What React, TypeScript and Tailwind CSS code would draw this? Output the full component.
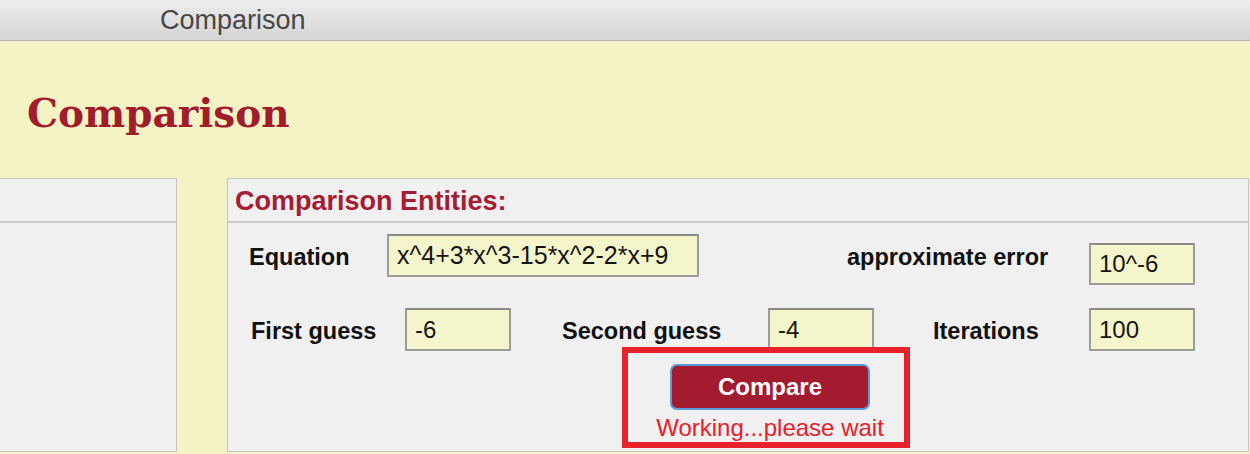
import React from "react";

const sans = { fontFamily: '"Liberation Sans", Arial, sans-serif' };

function Box({ value, w, h = 43, className = "" }: { value: string; w: string; h?: number; className?: string }) {
  return (
    <div
      className={`${w} ${className} flex items-center border-2 border-[#9c9c98] border-t-[#8a8a86] bg-[#f5f5cb] pl-[8px] text-[24px] leading-none text-[#141414]`}
      style={{ height: h }}
    >
      {value}
    </div>
  );
}

export default function App() {
  return (
    <div className="w-[1250px] h-[454px] overflow-hidden bg-[#f3f3c6]" style={sans}>
      {/* Title bar */}
      <div className="h-[41px] border-b border-[#b4b4b4] bg-gradient-to-b from-[#ededed] to-[#d4d4d4]">
        <div className="pl-[160px] text-[27px] leading-[40px] text-[#474747]">Comparison</div>
      </div>

      {/* Heading */}
      <div className="h-[137px] pl-[27px] pt-[52px]">
        <div
          className="text-[39px] leading-[40px] font-bold text-[#a21d2b]"
          style={{ fontFamily: '"DejaVu Serif", "Liberation Serif", serif' }}
        >
          Comparison
        </div>
      </div>

      {/* Panels */}
      <div className="flex h-[274px]">
        <div className="w-[177px] h-full border-y border-r border-[#c6c6c6] bg-[#f0f0f0] flex flex-col">
          <div className="h-[44px] border-b-2 border-[#cacaca]" />
          <div className="flex-1" />
        </div>

        <div className="ml-[50px] w-[1022px] h-full border border-[#c6c6c6] bg-[#f0f0f0] flex flex-col">
          <div className="h-[44px] border-b-2 border-[#cacaca] pl-[7px] pt-[2px]">
            <div className="text-[27px] leading-[40px] font-bold text-[#a51d33]">Comparison Entities:</div>
          </div>

          <div className="relative flex-1">
            {/* Row 1 */}
            <div className="flex items-start">
              <div className="ml-[21px] mt-[11px] h-[43px] w-[138px] flex items-center pt-[4px] text-[23.5px] leading-none font-bold text-[#111]">
                Equation
              </div>
              <Box value="x^4+3*x^3-15*x^2-2*x+9" w="w-[312px]" className="mt-[11px] text-[25px]" />
              <div className="ml-[148px] mt-[11px] h-[43px] w-[242px] flex items-center pt-[4px] text-[23.5px] leading-none font-bold text-[#111]">
                approximate error
              </div>
              <Box value="10^-6" w="w-[106px]" h={42} className="mt-[20px]" />
            </div>

            {/* Row 2 */}
            <div className="mt-[23px] flex h-[43px] items-center">
              <div className="ml-[23px] w-[154px] pt-[5px] text-[23.5px] leading-none font-bold text-[#111]">First guess</div>
              <Box value="-6" w="w-[106px]" />
              <div className="ml-[51px] w-[206px] pt-[5px] text-[23.5px] leading-none font-bold text-[#111]">Second guess</div>
              <Box value="-4" w="w-[106px]" />
              <div className="ml-[59px] w-[156px] pt-[5px] text-[23.5px] leading-none font-bold text-[#111]">Iterations</div>
              <Box value="100" w="w-[106px]" />
            </div>

            {/* Compare */}
            <div className="ml-[412px] mt-[13px] flex w-[260px] flex-col items-center">
              <div className="flex h-[46px] w-[200px] items-center justify-center rounded-[7px] border-2 border-[#5b9ad8] bg-[#a21b2e] text-[24px] font-bold text-white">
                Compare
              </div>
              <div className="mt-[6px] text-[24px] leading-[24px] text-[#e8202c]">Working...please wait</div>
            </div>

            {/* Annotation box */}
            <div className="pointer-events-none absolute left-[394px] top-[124px] h-[101px] w-[288px] border-[6px] border-[#e8212a]" />
          </div>
        </div>
      </div>
    </div>
  );
}
